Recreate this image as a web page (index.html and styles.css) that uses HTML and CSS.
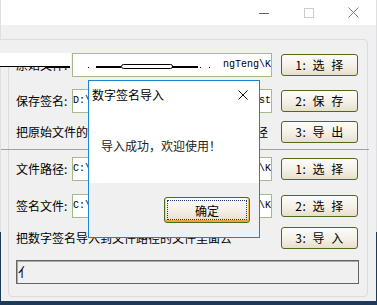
FILE: index.html
```html
<!DOCTYPE html>
<html lang="zh-CN">
<head>
  <meta charset="UTF-8" />
  <title>数字签名工具</title>
  <link rel="stylesheet" href="styles.css">
</head>
<body>

  <div class="window">
    <header class="titlebar">
      <div class="caption-btn">
        <svg width="10" height="10" viewBox="0 0 10 10"><path d="M0 5.5h10" stroke="#5a5a5a" /></svg>
      </div>
      <div class="caption-btn">
        <svg width="10" height="10" viewBox="0 0 10 10"><rect x="0.5" y="0.5" width="9" height="9" fill="none" stroke="#cccccc" /></svg>
      </div>
      <div class="caption-btn">
        <svg width="11" height="11" viewBox="0 0 11 11"><path d="M0.5 0.5L10.5 10.5M10.5 0.5L0.5 10.5" stroke="#7a7a7a" /></svg>
      </div>
    </header>

    <main class="client">
      <section class="group">
        <div class="row">
          <span class="label">原始文件:</span>
          <div class="edit">C:\Users\Administrator\DingTeng\K
            <svg class="smear-edit" width="150" height="22" viewBox="0 0 150 22">
              <rect x="0" y="0" width="150" height="22" fill="#fff" />
              <rect x="15" y="13" width="1" height="1" fill="#000" />
              <rect x="23" y="12" width="25" height="2" fill="#000" />
              <rect x="48.5" y="10.5" width="51" height="4" rx="2" fill="#fff" stroke="#000" />
              <rect x="99" y="12" width="26" height="2" fill="#000" />
              <rect x="127" y="13" width="1" height="1" fill="#000" />
              <rect x="136" y="13" width="1" height="1" fill="#000" />
            </svg>
          </div>
          <button class="btn">1: 选 择</button>
        </div>

        <div class="row">
          <span class="label">保存签名:</span>
          <div class="edit">D:\Users\Administrator\Signs\test</div>
          <button class="btn">2: 保 存</button>
        </div>

        <div class="row row-short">
          <span class="note">把原始文件的数字签名导出到保存签名文件路径</span>
          <button class="btn">3: 导 出</button>
        </div>

        <div class="separator"></div>

        <div class="row">
          <span class="label">文件路径:</span>
          <div class="edit">C:\Users\Administrator\DingTeng\K</div>
          <button class="btn">1: 选 择</button>
        </div>

        <div class="row">
          <span class="label">签名文件:</span>
          <div class="edit">C:\Users\Administrator\DingTeng\K</div>
          <button class="btn">2: 选 择</button>
        </div>

        <div class="row row-short">
          <span class="note">把数字签名导入到文件路径的文件里面去</span>
          <button class="btn">3: 导 入</button>
        </div>

        <div class="status">亻</div>
      </section>

      <!-- redraw leftovers over the first row -->
      <div class="corner-smear"></div>
      <svg class="smear-label" width="72" height="15" viewBox="0 0 72 15">
        <rect x="0" y="0" width="71" height="14" fill="#fff" />
        <rect x="0" y="13" width="45" height="1" fill="#000" />
        <rect x="45" y="13" width="25" height="2" fill="#000" />
      </svg>
    </main>

    <div class="dialog">
      <div class="dlg-title">
        <span>数字签名导入</span>
        <svg width="10" height="10" viewBox="0 0 10 10"><path d="M0.5 0.5L9.5 9.5M9.5 0.5L0.5 9.5" stroke="#111" /></svg>
      </div>
      <div class="dlg-body">导入成功，欢迎使用！</div>
      <div class="dlg-foot">
        <button class="dlg-ok">确定</button>
      </div>
    </div>
  </div>

</body>
</html>
```

FILE: styles.css
```css
/* ===== Palette ===== */
:root {
  --face: #f0f0f0;
  --group-line: #dcdcdc;
  --edit-line: #a3bb88;
  --btn-line: #4b6b1f;
  --text: #000;
  --accent: #1883d7;
}

/* Reset & Base */
*, *::before, *::after { box-sizing: border-box; margin: 0; padding: 0; }
body {
  font-family: "Noto Sans CJK SC", "Noto Sans", sans-serif;
  font-size: 12px;
  color: var(--text);
  background: linear-gradient(to bottom, #dedfe2 0, #dedfe2 232px, #1d3a5a 232px);
  height: 305px;
  overflow: hidden;
}

/* Window frame */
.window {
  position: relative;
  margin-left: 1px;
  width: 375px;
  height: 301px;
  background: var(--face);
}

.titlebar {
  height: 25px;
  background: #fff;
  display: flex;
  justify-content: flex-end;
}
.caption-btn {
  width: 45px;
  display: flex;
  align-items: center;
  justify-content: center;
}
.caption-btn svg { display: block; }

.client {
  position: relative;
  padding: 14px 0 0 7px;
}

/* Group box */
.group {
  width: 360px;
  height: 258px;
  border: 1px solid var(--group-line);
  border-radius: 4px;
  padding: 13px 9px 0 7px;
}

.row {
  display: flex;
  align-items: center;
  height: 24px;
  margin-bottom: 12px;
}
.row-short { height: 22px; }

.label {
  width: 56px;
  line-height: 24px;
  white-space: nowrap;
}
.note {
  white-space: nowrap;
  line-height: 22px;
}

.edit {
  position: relative;
  width: 200px;
  height: 24px;
  border: 1px solid var(--edit-line);
  background: #fff;
  font-family: "Liberation Mono", monospace;
  font-size: 10px;
  line-height: 22px;
  white-space: nowrap;
  overflow: hidden;
}
.smear-edit {
  position: absolute;
  left: 0;
  top: 0;
}

.btn {
  margin-left: auto;
  width: 77px;
  height: 22px;
  border: 1px solid var(--btn-line);
  border-radius: 3px;
  background: linear-gradient(to bottom, #fdfcfa 0%, #f4f0e6 55%, #e7dfcb 100%);
  font-family: "Noto Sans CJK SC", sans-serif;
  font-size: 12px;
  line-height: 20px;
  letter-spacing: 0.5px;
  word-spacing: 3px;
  color: var(--text);
}

.separator {
  height: 1px;
  background: #a0a0a0;
  margin: -3px -11px 7px -15px;
}

/* row gaps that differ from the default */
.group > .row:nth-child(2) { margin-bottom: 8px; }
.group > .row:nth-child(3) { margin-bottom: 9px; }
.group > .row:nth-child(5) { margin-bottom: 13px; }
.group > .row:nth-child(6) { margin-bottom: 9px; }
.group > .row:nth-child(7) { margin-bottom: 11px; }

.status {
  width: 343px;
  height: 24px;
  border: 1px solid #646464;
  box-shadow: inset 1px 1px 0 #a8a8a8;
  font-size: 13px;
  line-height: 22px;
  padding-left: 1px;
  overflow: hidden;
}

/* paint leftovers on the first row */
.corner-smear {
  position: absolute;
  left: -1px;
  top: 14px;
  width: 13px;
  height: 14px;
  background: var(--face);
  border-top: 1px solid var(--group-line);
}
.smear-label {
  position: absolute;
  left: -1px;
  top: 28px;
}

/* Message box */
.dialog {
  position: absolute;
  left: 87px;
  top: 80px;
  width: 172px;
  height: 158px;
  border: 1px solid var(--accent);
  background: var(--face);
}
.dlg-title {
  height: 26px;
  background: #fff;
  display: flex;
  align-items: center;
  justify-content: space-between;
  padding: 2px 11px 0 3px;
  line-height: 14px;
}
.dlg-title svg { display: block; }
.dlg-body {
  height: 76px;
  background: #fff;
  padding: 32px 0 0 12px;
  line-height: 13px;
  color: #222;
}
.dlg-foot {
  display: flex;
  justify-content: flex-end;
  padding: 14px 9px 0 0;
}
.dlg-ok {
  width: 86px;
  height: 26px;
  border: 1px solid var(--btn-line);
  border-radius: 3px;
  background: linear-gradient(to bottom, #fdfcfa 0%, #f3efe4 55%, #e6ddc8 100%);
  box-shadow: inset 0 -2px 0 #f2a23a, inset -1px 0 0 #f2b25a, inset 1px 0 0 #f8d49a;
  outline: 1px dotted #1f2f7a;
  outline-offset: -4px;
  font-family: "Noto Sans CJK SC", sans-serif;
  font-size: 12px;
  color: var(--text);
}
```
